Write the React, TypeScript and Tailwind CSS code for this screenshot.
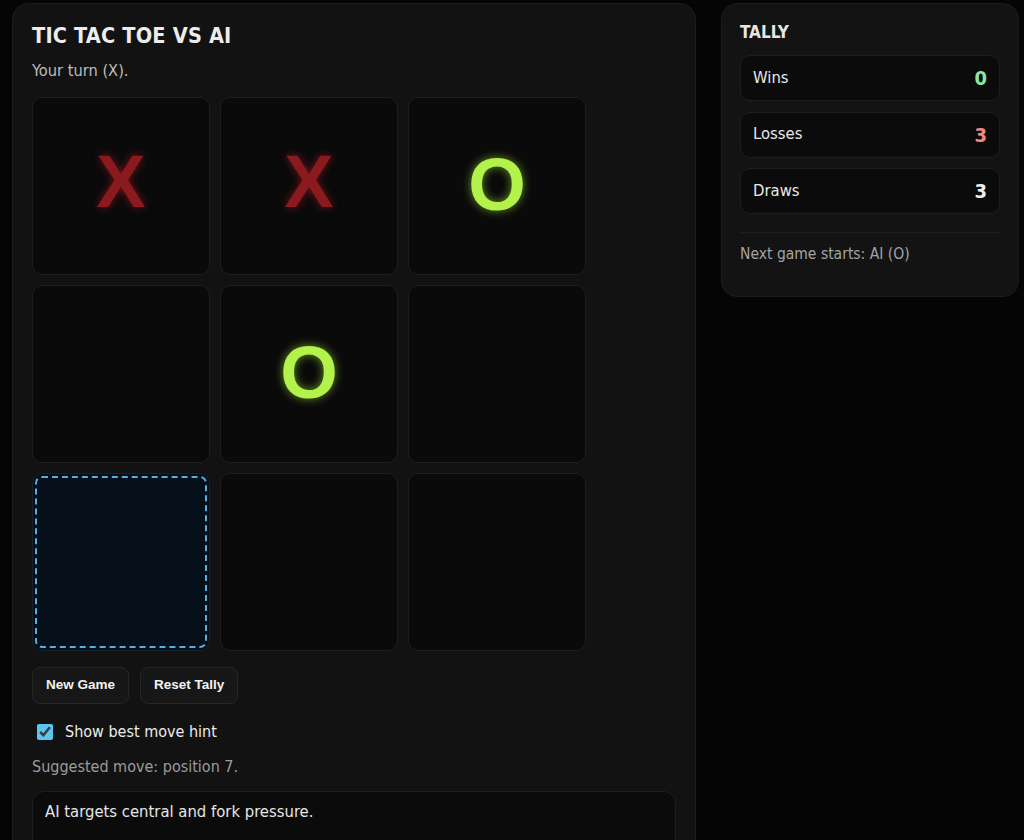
import React from "react";

type Mark = "X" | "O" | null;

const board: Mark[] = ["X", "X", "O", null, "O", null, null, null, null];
const hintIndex = 6;

const tally = [
  { label: "Wins", value: 0, color: "text-[#8ee6a4]" },
  { label: "Losses", value: 3, color: "text-[#f08a80]" },
  { label: "Draws", value: 3, color: "text-[#ededed]" },
];

const bodyFont = "font-['DejaVu_Sans_Condensed','DejaVu_Sans',sans-serif]";

const Cell: React.FC<{ mark: Mark; hint: boolean }> = ({ mark, hint }) => {
  const base =
    "flex items-center justify-center rounded-[10px] border font-['Liberation_Sans',Arial,sans-serif] text-[74px] font-bold leading-none";
  const tone = hint
    ? "border-[#15222d] bg-[#06101a] outline-2 outline-dashed outline-offset-[-5px] outline-[#5aaedc]"
    : "border-[#1e1e1e] bg-[#0a0a0a]";
  return (
    <div className={`${base} ${tone}`}>
      {mark === "X" && (
        <span className="-mt-[8px] text-[#8a1a1e] [text-shadow:0_0_8px_rgba(200,30,40,0.55)]">
          X
        </span>
      )}
      {mark === "O" && (
        <span className="-mt-[2px] text-[#b3f24a] [text-shadow:0_0_10px_rgba(170,240,60,0.6)]">
          O
        </span>
      )}
    </div>
  );
};

export default function App() {
  return (
    <div className={`min-h-screen bg-[#050505] pl-3 pt-[3px] ${bodyFont}`}>
      <div className="flex items-start gap-[25px]">
        <div className="w-[684px] min-h-[860px] rounded-2xl border border-[#1c1c1c] bg-[#121212] px-[19px] pt-5">
          <h1 className="text-[21.5px] font-bold leading-6 tracking-[0.2px] text-[#ececec]">
            TIC TAC TOE VS AI
          </h1>
          <p className="mt-[13px] text-[16.3px] leading-5 text-[#bdbdbd]">Your turn (X).</p>

          <div className="mt-4 grid grid-cols-[repeat(3,178px)] auto-rows-[178px] gap-[10px]">
            {board.map((mark, i) => (
              <Cell key={i} mark={mark} hint={i === hintIndex} />
            ))}
          </div>

          <div className="mt-4 flex gap-[11px] font-['Liberation_Sans',Arial,sans-serif] text-[13.5px] font-bold text-[#f2f2f2]">
            <button className="h-[37px] rounded-lg border border-[#262626] bg-[#171717] px-[13px]">
              New Game
            </button>
            <button className="h-[37px] rounded-lg border border-[#262626] bg-[#171717] px-[13px]">
              Reset Tally
            </button>
          </div>

          <label className="mt-4 flex h-6 items-center gap-3 text-[16px] text-[#ededed]">
            <input
              type="checkbox"
              defaultChecked
              className="ml-[5px] h-4 w-4 accent-[#5cc4f0]"
            />
            Show best move hint
          </label>

          <p className="mt-[13px] text-[16px] leading-5 text-[#9c9c9c]">
            Suggested move: position 7.
          </p>

          <div className="mt-[14px] min-h-[80px] rounded-xl border border-[#1f1f1f] bg-[#0b0b0b] px-3 pt-2 text-[16.5px] leading-6 text-[#e6e6e6]">
            AI targets central and fork pressure.
          </div>
        </div>

        <div className="w-[298px] rounded-2xl border border-[#1c1c1c] bg-[#131313] px-[18px] pb-8 pt-[18px]">
          <h2 className="text-[17px] font-bold leading-5 text-[#e6e6e6]">TALLY</h2>
          <div className="mt-[13px] flex flex-col gap-[10.5px]">
            {tally.map((row) => (
              <div
                key={row.label}
                className="flex h-[46px] items-center justify-between rounded-[10px] border border-[#1e1e1e] bg-[#0b0b0b] px-3"
              >
                <span className="text-[16.5px] text-[#e8e8e8]">{row.label}</span>
                <span className={`text-[20px] font-bold ${row.color}`}>{row.value}</span>
              </div>
            ))}
          </div>
          <div className="mt-[18px] h-px bg-[#1f1f1f]" />
          <p className="mt-[11px] text-[15.5px] leading-5 text-[#a3a3a3]">
            Next game starts: AI (O)
          </p>
        </div>
      </div>
    </div>
  );
}
